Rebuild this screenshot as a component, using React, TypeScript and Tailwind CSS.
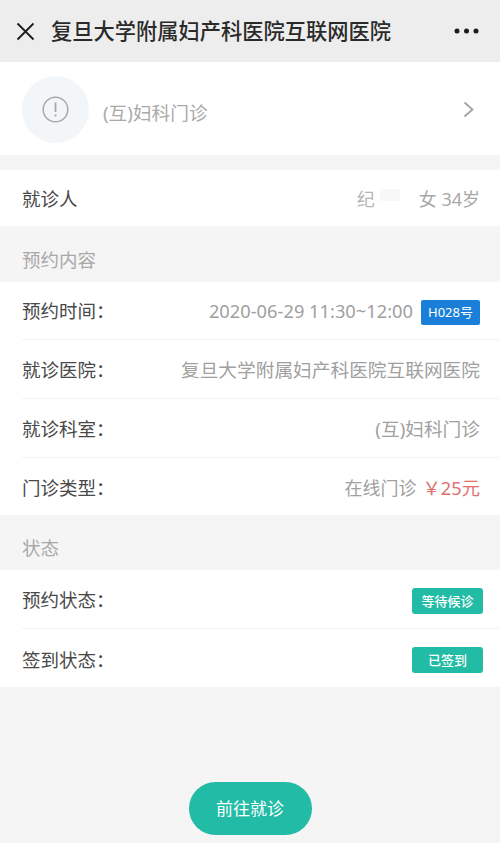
import React from 'react';

const Row: React.FC<{ label: string; h: string; children: React.ReactNode }> = ({ label, h, children }) => (
  <div className={`flex items-center justify-between pl-[22px] pr-[20px] bg-white ${h}`}>
    <span className="text-[18.5px] leading-none text-[#484848]">{label}</span>
    {children}
  </div>
);

const Divider = () => <div className="ml-[22px] h-px bg-[#f3f3f3]" />;

const Badge: React.FC<{ className?: string; children: React.ReactNode }> = ({ className, children }) => (
  <span className={`flex h-[26px] w-[71px] items-center justify-center rounded-[3px] bg-[#22bba6] text-[13px] font-medium leading-none text-white -mr-[3px] ${className || ''}`}>
    {children}
  </span>
);

export default function App() {
  return (
    <div className="flex h-[843px] w-[500px] flex-col overflow-hidden bg-[#f5f5f5] font-['Noto_Sans','Noto_Sans_CJK_SC',sans-serif]">
      <header className="flex h-[62px] items-center bg-[#ededed] pl-[16px] pr-[21px]">
        <svg width="19" height="19" viewBox="0 0 19 19" fill="none" stroke="#1c1c1c" strokeWidth="1.8" className="shrink-0">
          <path d="M1.5 1.5 17.5 17.5M17.5 1.5 1.5 17.5" />
        </svg>
        <h1 className="ml-[16px] flex-1 text-[21.25px] font-medium leading-none text-[#2a2a2a]">复旦大学附属妇产科医院互联网医院</h1>
        <svg width="25" height="6" viewBox="0 0 25 6" fill="#1c1c1c">
          <circle cx="3" cy="3" r="2.5" />
          <circle cx="12.5" cy="3" r="2.5" />
          <circle cx="22" cy="3" r="2.5" />
        </svg>
      </header>

      <section className="flex h-[93px] items-center bg-white pl-[22px] pr-[26px]">
        <div className="mt-[2px] flex h-[67px] w-[67px] items-center justify-center rounded-full bg-[#f3f6f9]">
          <svg width="27" height="27" viewBox="0 0 27 27" fill="none" stroke="#a8a8a8" strokeWidth="1.5">
            <circle cx="13.5" cy="13.5" r="12.3" />
            <path d="M13.5 6.5V16" strokeWidth="1.8" />
            <path d="M13.5 18.5V20.5" strokeWidth="1.8" />
          </svg>
        </div>
        <span className="ml-[14px] mt-[9px] flex-1 text-[18.7px] leading-none text-[#a9a9a9]">(互)妇科门诊</span>
        <svg width="11" height="17" viewBox="0 0 11 17" fill="none" stroke="#a0a0a0" strokeWidth="1.7" className="mt-[2px]">
          <path d="M1.5 1.5 9.5 8.5 1.5 15.5" />
        </svg>
      </section>

      <div className="mt-[15px]">
        <Row label="就诊人" h="h-[56px] pt-[2px]">
          <span className="flex items-center text-[18px] leading-none text-[#a8a8a8]">
            <span className="text-[#b5b5b5]">纪</span>
            <span className="mb-[8px] ml-[5px] h-[12px] w-[20px] bg-[#f8f8f8]" />
            <span className="ml-[19px]">女 34岁</span>
          </span>
        </Row>
      </div>

      <div className="flex h-[56px] items-center pl-[22px] pt-[12px] text-[18.5px] leading-none text-[#a9a9a9]">预约内容</div>

      <div className="bg-white">
        <Row label="预约时间：" h="h-[57px] pt-[2px]">
          <span className="flex items-center text-[18.3px] leading-none text-[#a0a0a0]">
            2020-06-29 11:30~12:00
            <span className="ml-[8px] mt-[2px] flex h-[25px] w-[59px] items-center justify-center rounded-[2px] bg-[#1a7fd8] text-[13px] text-white">H028号</span>
          </span>
        </Row>
        <Divider />
        <Row label="就诊医院：" h="h-[58px] pt-[2px]">
          <span className="text-[18.7px] leading-none text-[#a0a0a0]">复旦大学附属妇产科医院互联网医院</span>
        </Row>
        <Divider />
        <Row label="就诊科室：" h="h-[58px] pt-[2px]">
          <span className="text-[18.7px] leading-none text-[#a0a0a0]">(互)妇科门诊</span>
        </Row>
        <Divider />
        <Row label="门诊类型：" h="h-[57px] pt-[3px]">
          <span className="text-[18px] leading-none text-[#a0a0a0]">
            在线门诊<span className="ml-[6px] text-[18.3px] text-[#e07070]">￥25元</span>
          </span>
        </Row>
      </div>

      <div className="flex h-[55px] items-center pl-[22px] pt-[12px] text-[18.5px] leading-none text-[#a9a9a9]">状态</div>

      <div className="bg-white">
        <Row label="预约状态：" h="h-[58px] pt-[2px]">
          <Badge className="mt-[2px]">等待候诊</Badge>
        </Row>
        <Divider />
        <Row label="签到状态：" h="h-[58px] pt-[4px]">
          <Badge>已签到</Badge>
        </Row>
      </div>

      <div className="flex justify-center pt-[95px]">
        <button className="flex h-[53px] w-[123px] items-center justify-center rounded-full bg-[#22bba6] text-[17px] leading-none text-white">前往就诊</button>
      </div>
    </div>
  );
}
